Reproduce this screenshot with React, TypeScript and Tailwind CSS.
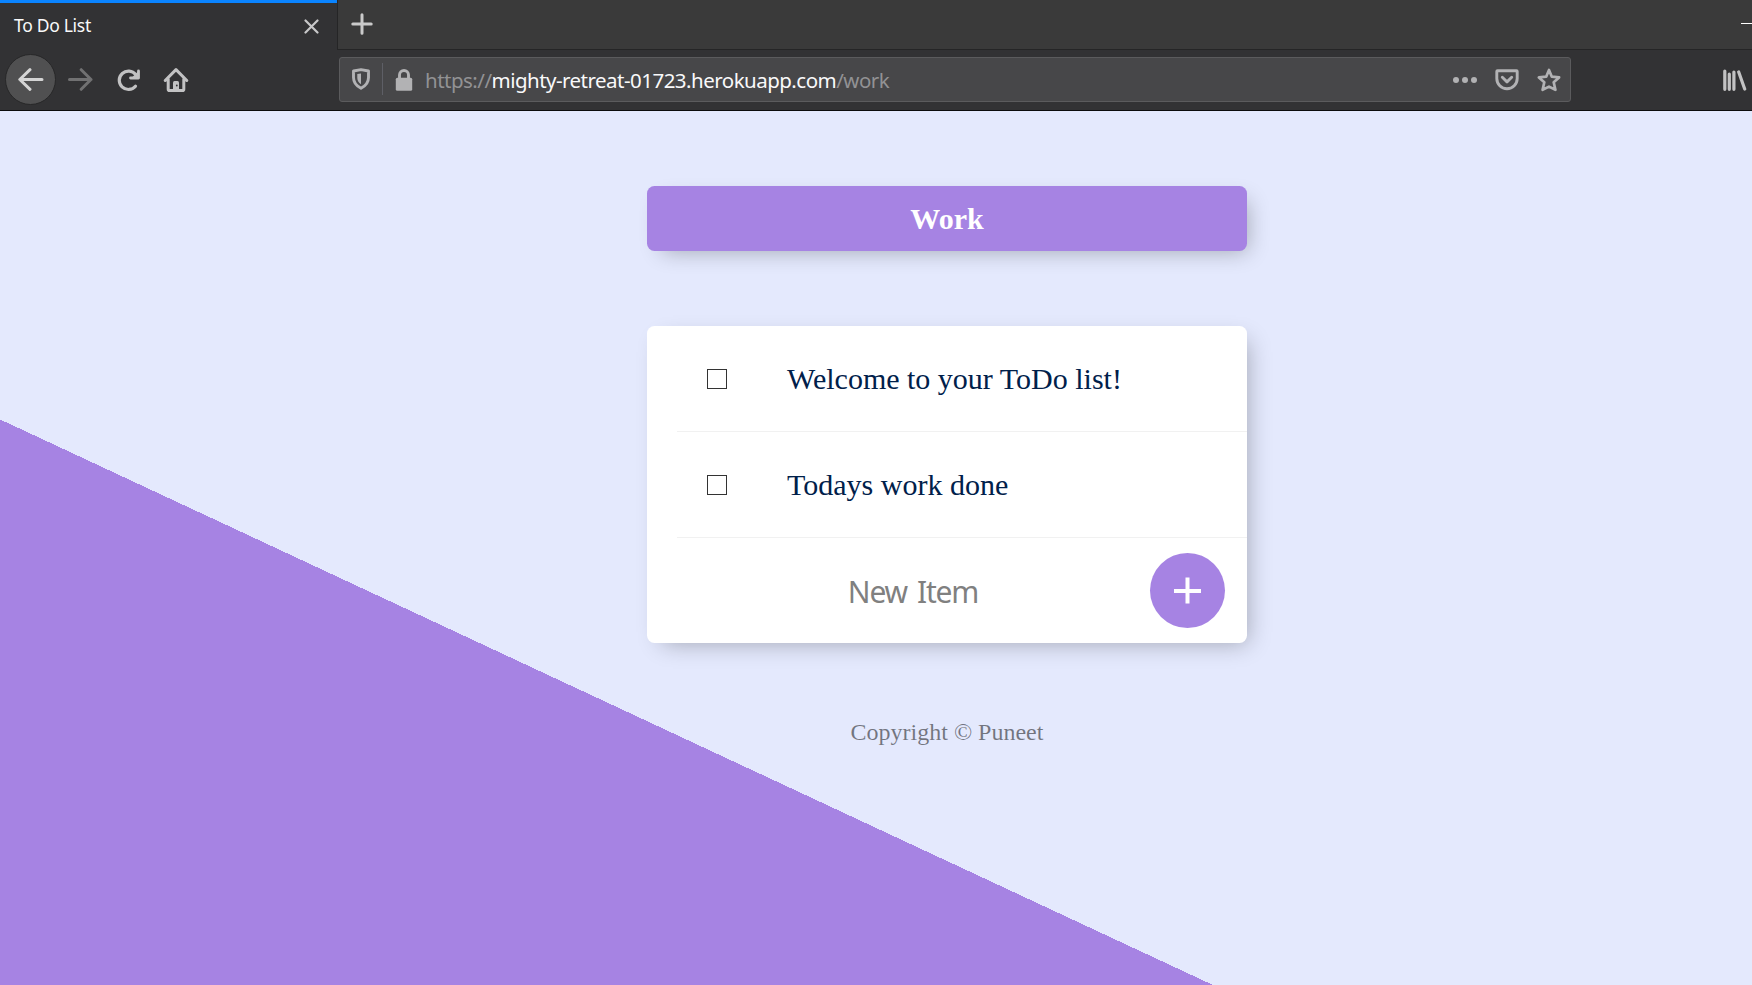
import React from "react";

const stroke = {
  fill: "none",
  stroke: "currentColor",
  strokeLinecap: "round" as const,
  strokeLinejoin: "round" as const,
};

function TabBar() {
  return (
    <div className="flex h-[50px] bg-[#3a3a3a]">
      <div className="flex w-[337px] shrink-0 items-center justify-between border-t-[3px] border-[#0a84ff] bg-[#323234] pb-px pl-[14px] pr-[18px]">
        <span className="-mt-[2px] text-[17.5px] leading-6 tracking-[-0.3px] text-[#f9f9fa]">To Do List</span>
        <svg className="h-[15px] w-[15px] text-[#c8c8c9]" viewBox="0 0 15 15" {...stroke} strokeWidth="2.200">
          <path d="M1.500 1.500 13.500 13.500M13.500 1.500 1.500 13.500" />
        </svg>
      </div>
      <div className="flex flex-1 justify-between border-b border-l border-[#252526] pl-[13px] pt-[13px]">
        <svg className="h-[22px] w-[22px] text-[#cacaca]" viewBox="0 0 22 22" {...stroke} strokeWidth="3">
          <path d="M11 1.800v18.400M1.800 11h18.400" />
        </svg>
        <div className="mt-[10px] h-px w-[11px] bg-white" />
      </div>
    </div>
  );
}

function AddressBar() {
  return (
    <div className="flex h-[45px] w-[1232px] shrink-0 items-center rounded-[3px] border border-[#5b5b5d] bg-[#474749] text-[#b2b2b4]">
      <svg className="ml-[12px] h-[22px] w-[18px]" viewBox="0 0 18 22" {...stroke} strokeWidth="2.900">
        <path d="M9 1.600 16.500 3v6.500c0 5-2.700 8.300-7.500 10.800C4.200 17.800 1.500 14.500 1.500 9.500V3Z" />
        <path d="M9 5.400 5.300 6.100v3.700c0 2.900 1.300 4.800 3.700 6.400Z" fill="currentColor" stroke="none" />
      </svg>
      <div className="ml-[12px] h-[32px] w-px bg-[#5e5f66]" />
      <svg className="ml-[12px] mt-px h-[22px] w-[18px]" viewBox="0 0 18 22">
        <path d="M4.500 10V6a4.500 4.500 0 0 1 9 0v4" fill="none" stroke="currentColor" strokeWidth="2.900" />
        <rect x="0.800" y="8.700" width="16.400" height="13" rx="1.500" fill="currentColor" />
      </svg>
      <p className="ml-[12px] mt-[2px] whitespace-nowrap text-[20.5px] leading-7 tracking-[-0.52px] text-[#929294]">
        https://<span className="text-[#f9f9fa]">mighty-retreat-01723.herokuapp.com</span>/work
      </p>
      <div className="ml-auto mr-[9px] mt-px flex items-center">
        <svg className="h-[6px] w-[24px]" viewBox="0 0 24 6" fill="currentColor">
          <circle cx="3" cy="3" r="3" />
          <circle cx="12" cy="3" r="3" />
          <circle cx="21" cy="3" r="3" />
        </svg>
        <svg className="ml-[18px] h-[22px] w-[24px]" viewBox="0 0 24 22" {...stroke} strokeWidth="2.900">
          <path d="M2.500 1.800h19a.7.7 0 0 1 .7.700V9.500a10.200 10.200 0 0 1-20.400 0V2.500a.7.7 0 0 1 .7-.7Z" />
          <path d="m7.300 8.300 4.700 4.600 4.700-4.600" />
        </svg>
        <svg className="ml-[18px] h-[24px] w-[24px]" viewBox="0 0 24 24" {...stroke} strokeWidth="2.700">
          <path d="m12 2 2.800 6.700 7.300.7-5.400 4.800 1.700 7.600L12 18.600l-6.400 3.200 1.700-7.600L1.900 9.400l7.300-.7Z" />
        </svg>
      </div>
    </div>
  );
}

function Toolbar() {
  return (
    <div className="flex h-[61px] items-center overflow-hidden border-b border-[#0c0c0d] bg-[#323234] pb-[2px] text-[#c2c2c3]">
      <div className="ml-[5px] flex h-[51px] w-[51px] shrink-0 items-center justify-center rounded-full border border-[#272728] bg-[#505051] text-[#d4d4d4]">
        <svg className="h-[23px] w-[26px]" viewBox="0 0 26 23" {...stroke} strokeWidth="3">
          <path d="M24 11.500H2M12 1.700 1.800 11.500 12 21.300" />
        </svg>
      </div>
      <svg className="ml-[11px] mt-px h-[23px] w-[26px] shrink-0 text-[#717172]" viewBox="0 0 26 23" {...stroke} strokeWidth="3">
        <path d="M2.500 11.500h21.500M14.200 1.700 24 11.500l-9.800 9.800" />
      </svg>
      <svg className="ml-[23px] mt-px h-[24px] w-[26px] shrink-0" viewBox="0 0 26 24" {...stroke} strokeWidth="3.200">
        <path d="M19.500 18.200a9.200 9.200 0 1 1 .2-11.600" />
        <path d="M22.500 3v7h-8" strokeWidth="2.800" />
        <path d="M22.500 3v7.300h-7.300Z" fill="currentColor" stroke="none" />
      </svg>
      <svg className="ml-[21px] mt-[2px] h-[26px] w-[26px] shrink-0" viewBox="0 0 26 26" {...stroke} strokeWidth="3">
        <path d="M2.200 13.500 13 2.600l10.800 10.900M5.200 12v10.200a1.300 1.300 0 0 0 1.300 1.300h13a1.300 1.300 0 0 0 1.300-1.300V12" />
        <path d="M10 24v-8.400a1.500 1.500 0 0 1 1.500-1.500h3a1.500 1.500 0 0 1 1.500 1.500V24Z" fill="currentColor" stroke="none" />
        <circle cx="13.800" cy="18.500" r="0.900" fill="#323234" stroke="none" />
      </svg>
      <div className="ml-[150px] flex">
        <AddressBar />
      </div>
      <svg className="ml-[151px] mt-[2px] h-[22px] w-[25px] shrink-0" viewBox="0 0 25 22" {...stroke} strokeWidth="3.200">
        <path d="M2.800 2v18.300M7.300 5v15.300M11.900 3v17.300M16.700 3l6 17" />
      </svg>
    </div>
  );
}

function TodoItem({ text }: { text: string }) {
  return (
    <label className="ml-[30px] flex h-[106px] items-center border-b border-[#f1f1f1]">
      <input type="checkbox" className="ml-[30px] h-[20px] w-[20px] appearance-none border border-[#333333] bg-white" />
      <span className="ml-[60px] font-['Liberation_Serif',serif] text-[30px] leading-[36px] text-[#00204a]">{text}</span>
    </label>
  );
}

export default function App() {
  return (
    <div className="h-[985px] w-[1752px] overflow-hidden font-['Noto_Sans',sans-serif]">
      <TabBar />
      <Toolbar />
      <main className="flex h-[874px] w-[1894px] flex-col items-center bg-[linear-gradient(25deg,#a683e3_50%,#e4e9fd_50%)] bg-[length:1894px_1500px] bg-no-repeat pt-[75px]">
        <div className="flex h-[65px] w-[600px] items-center justify-center rounded-[7.5px] bg-[#a683e3] shadow-[7.5px_7.5px_22.5px_-7.5px_rgba(0,0,0,0.3)]">
          <h1 className="font-['Liberation_Serif',serif] text-[30px] font-bold leading-[34px] text-white">Work</h1>
        </div>
        <div className="mt-[75px] w-[600px] rounded-[7.5px] bg-white shadow-[7.5px_7.5px_22.5px_-7.5px_rgba(0,0,0,0.3)]">
          <TodoItem text="Welcome to your ToDo list!" />
          <TodoItem text="Todays work done" />
          <form className="flex h-[105px] items-center pr-[22px]" onSubmit={(e) => e.preventDefault()}>
            <input
              type="text"
              placeholder="New Item"
              className="ml-[30px] h-[90px] w-[472px] bg-transparent pt-[2px] text-center text-[30px] tracking-[-1.2px] [word-spacing:3.5px] outline-none placeholder:text-[#808080]"
            />
            <button type="submit" className="ml-auto flex h-[75px] w-[75px] shrink-0 items-center justify-center rounded-full bg-[#a683e3]">
              <svg className="h-[27px] w-[27px]" viewBox="0 0 27 27" fill="none" stroke="white" strokeWidth="4">
                <path d="M13.500 .5v26M0 14h27" />
              </svg>
            </button>
          </form>
        </div>
        <footer className="mt-[75px] font-['Liberation_Serif',serif] text-[24px] leading-[28px] text-black/50">Copyright © Puneet</footer>
      </main>
    </div>
  );
}
